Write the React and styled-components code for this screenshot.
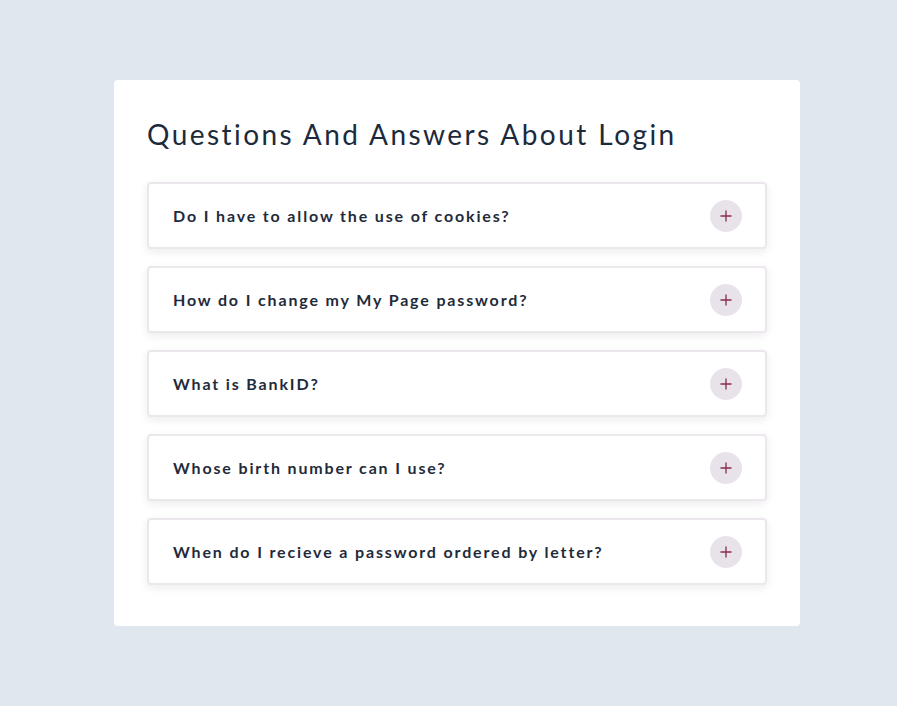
import React from 'react'
import styled, { createGlobalStyle } from 'styled-components'

const GlobalStyle = createGlobalStyle`
  * { box-sizing: border-box; }
  body {
    margin: 0;
    background: #e1e7ef;
    font-family: 'Lato', 'Noto Sans', sans-serif;
  }
`

const questions = [
  'Do I have to allow the use of cookies?',
  'How do I change my My Page password?',
  'What is BankID?',
  'Whose birth number can I use?',
  'When do I recieve a password ordered by letter?',
]

const App = () => {
  return (
    <>
      <GlobalStyle />
      <Page>
        <Card>
          <Title>Questions And Answers About Login</Title>
          <List>
            {questions.map((q) => (
              <Item key={q}>
                <Question>{q}</Question>
                <Toggle aria-label='open'>
                  <svg width='12' height='12' viewBox='0 0 12 12'>
                    <path d='M6 0.5v11M0.5 6h11' stroke='#8a2a4c' strokeWidth='1.3' fill='none' />
                  </svg>
                </Toggle>
              </Item>
            ))}
          </List>
        </Card>
      </Page>
    </>
  )
}

export default App

const Page = styled.div`
  min-height: 706px;
  display: flex;
  justify-content: center;
  padding: 80px 0 0 17px;
`

const Card = styled.div`
  width: 686px;
  height: 546px;
  background: #fff;
  border-radius: 4px;
  padding: 33px 33px 41px;
`

const Title = styled.h1`
  margin: 0 0 29px;
  padding-top: 2px;
  font-size: 28px;
  line-height: 38px;
  font-weight: 400;
  letter-spacing: 2.45px;
  color: #1c2a3c;
`

const List = styled.div`
  display: flex;
  flex-direction: column;
  gap: 17px;
`

const Item = styled.div`
  height: 67px;
  display: flex;
  align-items: center;
  justify-content: space-between;
  padding: 0 23px 0 24px;
  border: 2px solid #ece6ed;
  border-radius: 4px;
  background: #fff;
  box-shadow: 0 3px 10px rgba(0, 0, 0, 0.08);
`

const Question = styled.span`
  font-size: 16px;
  font-weight: 700;
  letter-spacing: 1.85px;
  color: #1f2b3b;
`

const Toggle = styled.button`
  width: 32px;
  height: 32px;
  border-radius: 50%;
  border: none;
  padding: 0;
  background: #e8e3ea;
  display: flex;
  align-items: center;
  justify-content: center;
  cursor: pointer;
`
